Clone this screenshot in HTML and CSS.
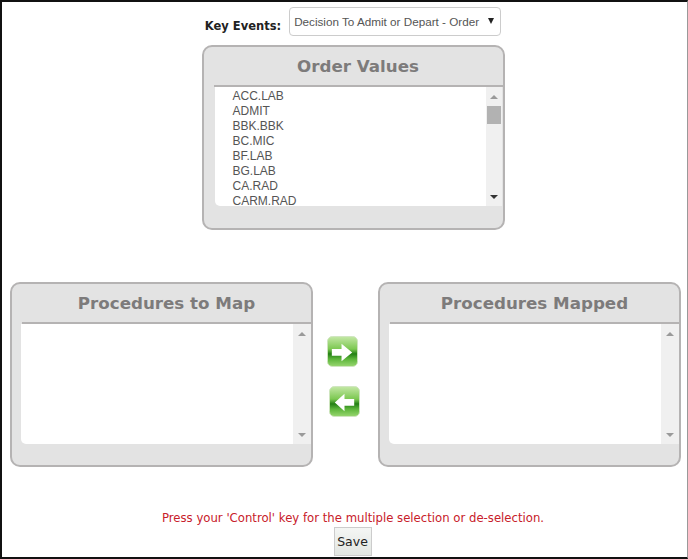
FILE: index.html
```html
<!DOCTYPE html>
<html lang="en">
<head>
  <meta charset="UTF-8" />
  <title>Key Events</title>
  <link rel="stylesheet" href="styles.css">
</head>
<body>

  <div class="page">
    <div class="key-row">
      <label class="key-label">Key Events:</label>
      <div class="key-select">
        <span>Decision To Admit or Depart - Order</span>
        <span class="select-arrow"></span>
      </div>
    </div>

    <!-- Order values -->
    <div class="panel panel-top">
      <h2>Order Values</h2>
      <div class="list-box list-short">
        <ul class="items">
          <li>ACC.LAB</li>
          <li>ADMIT</li>
          <li>BBK.BBK</li>
          <li>BC.MIC</li>
          <li>BF.LAB</li>
          <li>BG.LAB</li>
          <li>CA.RAD</li>
          <li>CARM.RAD</li>
        </ul>
        <div class="scrollbar">
          <span class="arrow-up"></span>
          <span class="thumb"></span>
          <span class="arrow-down dark"></span>
        </div>
      </div>
    </div>

    <!-- Procedures -->
    <div class="map-row">
      <div class="panel">
        <h2>Procedures to Map</h2>
        <div class="list-box list-tall">
          <div class="items"></div>
          <div class="scrollbar">
            <span class="arrow-up"></span>
            <span class="arrow-down"></span>
          </div>
        </div>
      </div>

      <div class="move-buttons">
        <svg class="move-btn" viewBox="0 0 32 32" width="31" height="31">
          <use href="#btn-base"></use>
          <path d="M5 13.500h10V8l11 9-11 9v-5.500H5z" fill="#fff"/>
        </svg>
        <svg class="move-btn move-left" viewBox="0 0 32 32" width="31" height="31">
          <use href="#btn-base"></use>
          <path d="M26 13.500H16V8L6 17l10 9v-5.500h10z" fill="#fff"/>
        </svg>
      </div>

      <div class="panel">
        <h2>Procedures Mapped</h2>
        <div class="list-box list-tall">
          <div class="items"></div>
          <div class="scrollbar">
            <span class="arrow-up"></span>
            <span class="arrow-down"></span>
          </div>
        </div>
      </div>
    </div>

    <p class="hint">Press your 'Control' key for the multiple selection or de-selection.</p>
    <button class="save-btn">Save</button>
  </div>

  <svg width="0" height="0" class="defs">
    <defs>
      <linearGradient id="btn-fill" x1="0" y1="0" x2="0" y2="1">
        <stop offset="0" stop-color="#c4e8a6"/>
        <stop offset="0.42" stop-color="#7cc851"/>
        <stop offset="0.58" stop-color="#237f14"/>
        <stop offset="0.75" stop-color="#5cb53a"/>
        <stop offset="1" stop-color="#98d670"/>
      </linearGradient>
      <g id="btn-base">
        <rect x="0.500" y="0.500" width="31" height="31" rx="5" fill="url(#btn-fill)" stroke="#cfe5c0"/>
      </g>
    </defs>
  </svg>

</body>
</html>
```

FILE: styles.css
```css
* {
  box-sizing: border-box;
}

body {
  margin: 0;
  background-color: #fff;
  font-family: "Liberation Sans", Arial, sans-serif;
}

.page {
  width: 688px;
  height: 559px;
  padding-top: 5px;
  border-top: 2px solid #111;
  border-bottom: 2px solid #111;
  border-left: 2px solid #111;
  border-right: 1px solid #999;
  display: flex;
  flex-direction: column;
  align-items: center;
  overflow: hidden;
}

.defs {
  position: absolute;
}

.key-row {
  display: flex;
  align-items: center;
  gap: 8px;
  margin-left: 17px;
}

.key-label {
  font-family: "DejaVu Sans", Verdana, sans-serif;
  font-size: 11.500px;
  font-weight: bold;
  color: #222;
  padding-top: 8px;
}

.key-select {
  width: 212px;
  height: 29px;
  padding: 0 6px 0 4px;
  display: flex;
  align-items: center;
  justify-content: space-between;
  font-size: 11.700px;
  color: #555;
  background-color: #fff;
  border: 1px solid #ccc;
  border-radius: 4px;
}

.select-arrow {
  margin-top: -2px;
  border-left: 3.500px solid transparent;
  border-right: 3.500px solid transparent;
  border-top: 6px solid #222;
}

.panel {
  width: 303px;
  background-color: #e3e3e3;
  border: 2px solid #b5b3b3;
  border-radius: 10px;
}

.panel-top {
  margin-top: 9px;
  margin-left: 17px;
  height: 185px;
}

.panel h2 {
  margin: 0 0 0 10px;
  height: 40px;
  line-height: 38px;
  text-align: center;
  font-family: "DejaVu Sans", Verdana, sans-serif;
  font-size: 16.700px;
  font-weight: bold;
  color: #7d7b7b;
  border-bottom: 2px solid #b5b3b3;
}

.list-box {
  display: flex;
  margin-left: 9px;
  background-color: #fff;
  border-radius: 0 0 0 5px;
}

.panel-top .list-box {
  margin-left: 11px;
  margin-right: 1px;
}

.list-short {
  height: 119px;
}

.list-tall {
  height: 120px;
}

.items {
  flex: 1;
  margin: 0;
  padding: 2px 0 0 18px;
  list-style: none;
  font-size: 12px;
  line-height: 15px;
  color: #555;
}

.scrollbar {
  width: 18px;
  display: flex;
  flex-direction: column;
  align-items: center;
  background-color: #f0f0f0;
}

.panel-top .scrollbar {
  width: 16px;
}

.thumb {
  width: 14px;
  height: 18px;
  margin-top: 7px;
  background-color: #b2b2b2;
}

.arrow-up,
.arrow-down {
  border-left: 4px solid transparent;
  border-right: 4px solid transparent;
}

.arrow-up {
  margin-top: 8px;
  border-bottom: 4px solid #9a9a9a;
}

.arrow-down {
  margin-top: auto;
  margin-bottom: 7px;
  border-top: 4px solid #9a9a9a;
}

.arrow-down.dark {
  border-top-color: #333;
}

.map-row {
  width: 100%;
  margin-top: 52px;
  padding: 0 6px 0 8px;
  display: flex;
  justify-content: space-between;
}

.map-row .panel {
  height: 185px;
}

.move-buttons {
  display: flex;
  flex-direction: column;
  margin-right: 4px;
  padding-top: 54px;
  gap: 19px;
}

.move-btn {
  display: block;
}

.move-left {
  margin-left: 2px;
}

.hint {
  margin: 44px 0 0 17px;
  font-family: "DejaVu Sans", Verdana, sans-serif;
  font-size: 11.700px;
  line-height: 14px;
  color: #c8202a;
}

.save-btn {
  width: 38px;
  height: 29px;
  margin: 2px 0 0 16px;
  padding: 0;
  font-family: "DejaVu Sans", Verdana, sans-serif;
  font-size: 12.500px;
  color: #222;
  background: linear-gradient(#f4f6f4, #e2e6e2);
  border: 1px solid #ccc;
}
```
